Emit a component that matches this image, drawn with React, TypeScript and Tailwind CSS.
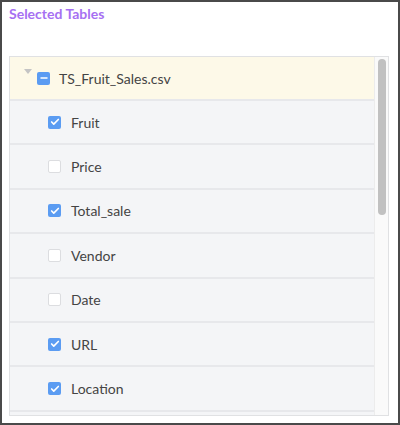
import { Check, Minus } from 'lucide-react';

interface Column {
  name: string;
  checked: boolean;
}

const columns: Column[] = [
  { name: 'Fruit', checked: true },
  { name: 'Price', checked: false },
  { name: 'Total_sale', checked: true },
  { name: 'Vendor', checked: false },
  { name: 'Date', checked: false },
  { name: 'URL', checked: true },
  { name: 'Location', checked: true },
];

const Box = ({ checked }: { checked: boolean }) =>
  checked ? (
    <span className="flex h-[13px] w-[13px] items-center justify-center rounded-[2px] bg-[#5b9cf2]">
      <Check className="h-[10px] w-[10px] text-white" strokeWidth={4} />
    </span>
  ) : (
    <span className="h-[13px] w-[13px] rounded-[2px] border border-[#dcdde0] bg-white" />
  );

export default function App() {
  return (
    <div
      className="h-[425px] w-[400px] overflow-hidden border-2 border-[#4a4a4a] bg-white px-[7px] pt-[4px]"
      style={{ fontFamily: 'Lato, "Liberation Sans", sans-serif' }}
    >
      <h2 className="text-[14px] font-bold leading-4 text-[#a670f2]">Selected Tables</h2>

      <div className="mt-[34px] flex h-[360px] w-[380px] border border-[#e0e1e3]">
        <div className="flex-1 overflow-hidden">
          {/* Table header */}
          <div className="flex h-[44px] items-center border-b-2 border-[#e7e8eb] bg-[#fdf9e8]">
            <svg className="ml-[14px] -mt-[14px] h-[5px] w-[8px]" viewBox="0 0 8 5">
              <path d="M0 0h8L4 5z" fill="#c4c4c4" />
            </svg>
            <span className="ml-[5px] flex h-[13px] w-[13px] items-center justify-center rounded-[2px] bg-[#5b9cf2]">
              <Minus className="h-[10px] w-[10px] text-white" strokeWidth={4} />
            </span>
            <span className="ml-[9px] text-[14px] text-[#444]">TS_Fruit_Sales.csv</span>
          </div>

          {columns.map((col) => (
            <div
              key={col.name}
              className="flex h-[44.4px] items-center border-b-2 border-[#e7e8eb] bg-[#f4f5f7] pl-[38px]"
            >
              <Box checked={col.checked} />
              <span className="ml-[10px] text-[14px] text-[#444]">{col.name}</span>
            </div>
          ))}
          <div className="h-[44px] bg-[#f4f5f7]" />
        </div>

        {/* Scrollbar */}
        <div className="w-[14px] border-l border-[#ececec] bg-[#fafafa] pt-[2px]">
          <div className="mx-auto h-[156px] w-[8px] rounded-full bg-[#c1c1c1]" />
        </div>
      </div>
    </div>
  );
}
